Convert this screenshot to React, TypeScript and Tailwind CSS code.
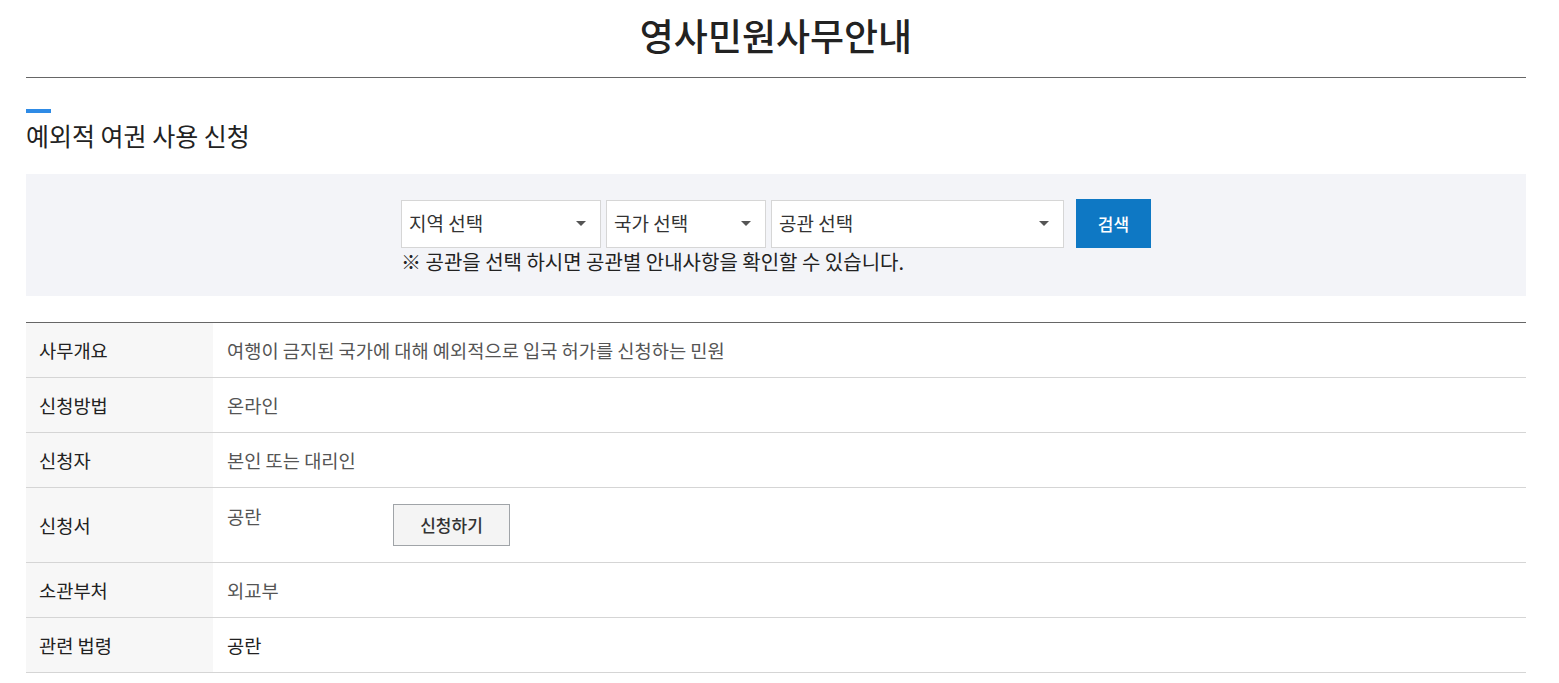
import React from "react";

const rows: { label: string; value: string; dark?: boolean; apply?: boolean }[] = [
  { label: "사무개요", value: "여행이 금지된 국가에 대해 예외적으로 입국 허가를 신청하는 민원" },
  { label: "신청방법", value: "온라인" },
  { label: "신청자", value: "본인 또는 대리인" },
  { label: "신청서", value: "공란", apply: true },
  { label: "소관부처", value: "외교부" },
  { label: "관련 법령", value: "공란", dark: true },
];

const SelectBox = ({ label, width }: { label: string; width: string }) => (
  <div
    className={`${width} h-[48px] bg-white border border-[#d6d6d6] flex items-center justify-between pl-[7px] pr-[14px] text-[19px] text-[#333]`}
  >
    <span>{label}</span>
    <span className="w-0 h-0 border-l-[5px] border-r-[5px] border-t-[5px] border-l-transparent border-r-transparent border-t-[#555]" />
  </div>
);

const App: React.FC = () => {
  return (
    <div
      className="w-[1500px] ml-[26px] bg-white text-[#222]"
      style={{ fontFamily: '"Noto Sans CJK KR", "Noto Sans", sans-serif' }}
    >
      {/* page title */}
      <div className="h-[78px] border-b border-[#666] flex items-center justify-center pb-[6px]">
        <h1 className="text-[37px] font-medium text-[#222] leading-none">영사민원사무안내</h1>
      </div>

      {/* section title */}
      <div className="mt-[31px] w-[25px] h-[4px] bg-[#2e8be6]" />
      <h2 className="mt-[4px] text-[25px] leading-[36px] text-[#222]">예외적 여권 사용 신청</h2>

      {/* search box */}
      <div className="mt-[21px] h-[122px] bg-[#f3f4f8] flex justify-center pt-[25px]">
        <div className="w-[750px]">
          <div className="flex items-center">
            <SelectBox label="지역 선택" width="w-[200px]" />
            <div className="w-[5px]" />
            <SelectBox label="국가 선택" width="w-[160px]" />
            <div className="w-[5px]" />
            <SelectBox label="공관 선택" width="w-[293px]" />
            <button className="ml-[12px] w-[75px] h-[49px] bg-[#0e78c4] text-white text-[17px] font-medium">
              검색
            </button>
          </div>
          <p className="text-[20px] leading-[26px] text-[#222] mt-[1px] whitespace-nowrap">
            ※ 공관을 선택 하시면 공관별 안내사항을 확인할 수 있습니다.
          </p>
        </div>
      </div>

      {/* info table */}
      <div className="mt-[26px] border-t border-[#666]">
        {rows.map((row, i) => (
          <div key={i} className="flex border-b border-[#d5d5d5]">
            <div className="w-[187px] shrink-0 bg-[#f7f7f7] pl-[13px] flex items-center text-[18.7px] text-[#222]">
              {row.label}
            </div>
            {row.apply ? (
              <div className="flex items-start pl-[14px] pt-[16px] pb-[16px] text-[18.7px] text-[#555]">
                <span className="w-[166px] leading-[25px] -mt-[1px]">{row.value}</span>
                <button className="w-[117px] h-[42px] bg-[#f4f4f4] border border-[#a0a4a8] text-[17px] font-medium text-[#333]">
                  신청하기
                </button>
              </div>
            ) : (
              <div
                className={`h-[54px] flex items-center pl-[14px] text-[18.7px] ${
                  row.dark ? "text-[#222]" : "text-[#555]"
                }`}
              >
                {row.value}
              </div>
            )}
          </div>
        ))}
      </div>
    </div>
  );
};

export default App;
